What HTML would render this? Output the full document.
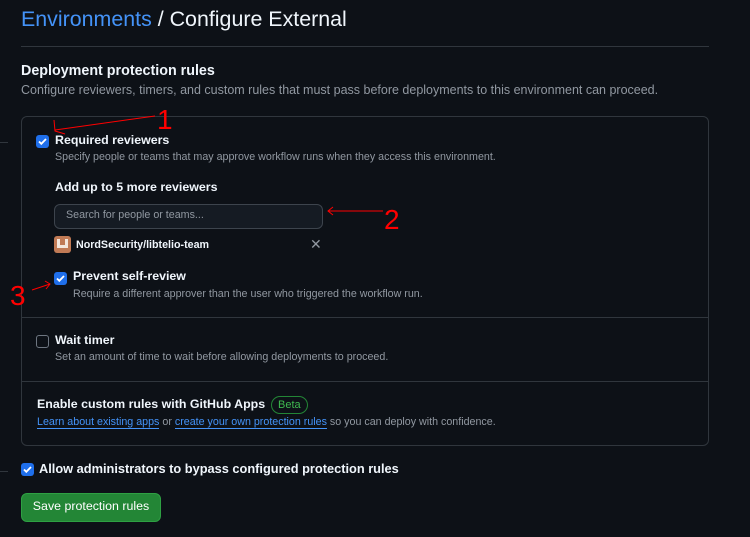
<!DOCTYPE html>
<html><head><style>
*{margin:0;padding:0;box-sizing:border-box}
body{width:750px;height:537px;background:#0d1117;font-family:"Liberation Sans",sans-serif;color:#f0f6fc;position:relative;overflow:hidden}
.a{position:absolute;white-space:nowrap}
.cb{position:absolute;width:13px;height:13px;border-radius:3px;background:#1f6feb}
.cb svg{position:absolute;left:1px;top:1px}
.cbo{position:absolute;width:13px;height:13px;border-radius:3px;border:1px solid #6e7681;background:#0d1117}
.g{color:#9198a1;font-size:10.7px}
.b{font-weight:bold;font-size:12.4px}
.l{color:#4493f8;border-bottom:1px solid #4493f8}
</style></head><body>
<div class="a" style="left:21px;top:7px;font-size:21.4px;"><span style="color:#4493f8">Environments</span> / Configure External</div>
<div class="a" style="left:21px;top:46px;width:688px;height:1px;background:#30363d"></div>
<div class="a" style="left:21px;top:63px;font-size:14.3px;font-weight:bold">Deployment protection rules</div>
<div class="a" style="left:21px;top:83px;font-size:12.5px;color:#9198a1">Configure reviewers, timers, and custom rules that must pass before deployments to this environment can proceed.</div>
<div class="a" style="left:21px;top:116px;width:688px;height:330px;border:1px solid #30363d;border-radius:6px"></div>
<div class="a" style="left:22px;top:317px;width:686px;height:1px;background:#30363d"></div>
<div class="a" style="left:22px;top:381px;width:686px;height:1px;background:#30363d"></div>
<div class="a" style="left:0;top:142px;width:8px;height:1px;background:#30363d"></div>
<div class="a" style="left:0;top:471px;width:8px;height:1px;background:#30363d"></div>

<div class="cb" style="left:36px;top:135px"><svg width="11" height="11" viewBox="0 0 11 11"><path d="M2 5.5l2.3 2.3L9 3" stroke="#fff" stroke-width="1.8" fill="none"/></svg></div>
<div class="a b" style="left:55px;top:133px">Required reviewers</div>
<div class="a g" style="left:55px;top:151px">Specify people or teams that may approve workflow runs when they access this environment.</div>
<div class="a b" style="left:55px;top:180px">Add up to 5 more reviewers</div>
<div class="a" style="left:54px;top:204px;width:269px;height:25px;border:1px solid #3d444d;border-radius:6px;background:#151b23"></div>
<div class="a" style="left:66px;top:209px;font-size:10.7px;color:#9198a1">Search for people or teams...</div>
<div class="a" style="left:54px;top:236px;width:17px;height:17px;border-radius:3px;background:#c07a55"></div>
<div class="a" style="left:57px;top:239px;width:11px;height:9px;background:#f3e6dc"></div>
<div class="a" style="left:60px;top:239px;width:5px;height:6px;background:#c07a55"></div>
<div class="a b" style="left:76px;top:239px;font-size:10.7px">NordSecurity/libtelio-team</div>
<div class="a" style="left:310px;top:236px;font-size:14px;color:#9198a1">✕</div>
<div class="cb" style="left:54px;top:272px"><svg width="11" height="11" viewBox="0 0 11 11"><path d="M2 5.5l2.3 2.3L9 3" stroke="#fff" stroke-width="1.8" fill="none"/></svg></div>
<div class="a b" style="left:73px;top:269px">Prevent self-review</div>
<div class="a g" style="left:73px;top:288px">Require a different approver than the user who triggered the workflow run.</div>

<div class="cbo" style="left:36px;top:335px"></div>
<div class="a b" style="left:55px;top:333px">Wait timer</div>
<div class="a g" style="left:55px;top:351px">Set an amount of time to wait before allowing deployments to proceed.</div>

<div class="a b" style="left:37px;top:397px">Enable custom rules with GitHub Apps</div>
<div class="a" style="left:271px;top:396px;height:18px;padding:0 6px;border:1px solid #238636;border-radius:9px;color:#3fb950;font-size:11px;line-height:16px">Beta</div>
<div class="a g" style="left:37px;top:416px"><span class="l">Learn about existing apps</span> or <span class="l">create your own protection rules</span> so you can deploy with confidence.</div>

<div class="cb" style="left:21px;top:463px"><svg width="11" height="11" viewBox="0 0 11 11"><path d="M2 5.5l2.3 2.3L9 3" stroke="#fff" stroke-width="1.8" fill="none"/></svg></div>
<div class="a b" style="left:39px;top:461px;font-size:12.8px">Allow administrators to bypass configured protection rules</div>
<div class="a" style="left:21px;top:493px;width:140px;height:29px;background:#238636;border:1px solid #2ea043;border-radius:6px;color:#fff;font-size:12.4px;text-align:center;line-height:25px">Save protection rules</div>

<svg class="a" style="left:0;top:0" width="750" height="537">
<g stroke="#f00" fill="none" stroke-width="1">
<path d="M55 130 L155 116"/><path d="M54 120 L55 131 L65 134"/>
<path d="M328 211 L383 211"/><path d="M333 207 L328 211 L333 215"/>
<path d="M32 290 L50 284"/><path d="M45 281 L50 284 L46 289"/>
</g>
<text x="157" y="129" fill="#f00" font-size="28" font-family="Liberation Sans">1</text>
<text x="384" y="229" fill="#f00" font-size="28" font-family="Liberation Sans">2</text>
<text x="10" y="305" fill="#f00" font-size="28" font-family="Liberation Sans">3</text>
</svg>
</body></html>
